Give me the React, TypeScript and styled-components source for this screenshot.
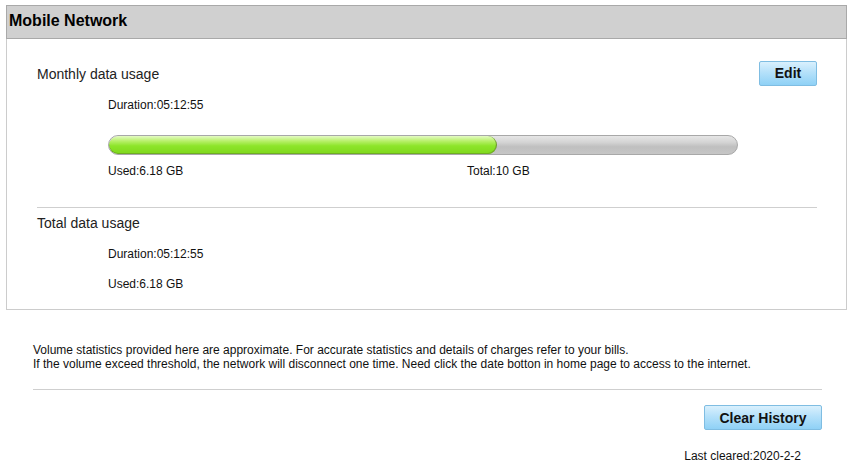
import React from "react";
import styled, { createGlobalStyle } from "styled-components";

const Global = createGlobalStyle`
  html, body { margin: 0; padding: 0; background: #fff; }
  body { font-family: "Liberation Sans", Arial, sans-serif; color: #000; }
`;

const Page = styled.div`
  width: 852px;
  height: 466px;
  padding: 5px 0 0 6px;
  box-sizing: border-box;
  overflow: hidden;
`;

const Panel = styled.section`
  width: 841px;
  height: 305px;
  box-sizing: border-box;
  border: 1px solid #cccccc;
  border-top: none;
  display: flex;
  flex-direction: column;
`;

const Header = styled.header`
  height: 34px;
  box-sizing: border-box;
  background: #d0d0d0;
  border: 1px solid #a9a9a9;
  margin: 0 -1px;
  display: flex;
  align-items: center;
  padding: 0 0 2px 2px;
  font-size: 16px;
  font-weight: bold;
  color: #000;
`;

const Section = styled.div<{ $top: number }>`
  padding: ${(p) => p.$top}px 29px 0 30px;
  display: flex;
  flex-direction: column;
`;

const TitleRow = styled.div`
  display: flex;
  justify-content: space-between;
  align-items: center;
  height: 24px;
`;

const SectionTitle = styled.div`
  font-size: 14px;
  color: #222;
  padding-top: 2px;
`;

const Button = styled.button<{ $w: number }>`
  width: ${(p) => p.$w}px;
  height: 25px;
  box-sizing: border-box;
  border: 1px solid #7fbde2;
  border-radius: 2px;
  background: linear-gradient(#d9f0fd 0%, #b5e1fa 45%, #8fd1f6 100%);
  font-family: "Liberation Sans", Arial, sans-serif;
  font-size: 14px;
  font-weight: bold;
  color: #111;
  padding: 0;
  cursor: pointer;
`;

const Info = styled.div<{ $mt: number }>`
  margin: ${(p) => p.$mt}px 0 0 71px;
  font-size: 12px;
  color: #111;
  line-height: 14px;
`;

const Track = styled.div`
  margin: 23px 0 0 71px;
  width: 630px;
  height: 20px;
  box-sizing: border-box;
  border: 1px solid #a8a8a8;
  border-radius: 10px;
  background: linear-gradient(#e6e6e6 0%, #d4d4d4 35%, #bfbfbf 60%, #c6c6c6 100%);
  overflow: hidden;
  display: flex;
`;

const Fill = styled.div`
  height: 100%;
  box-sizing: border-box;
  border-right: 1px solid #6f9f2c;
  border-radius: 10px;
  background: linear-gradient(#e4fbc4 0%, #b8f06a 28%, #8de52a 55%, #7fd81c 100%);
  box-shadow: inset 0 -1px 0 #6fae22;
`;

const Labels = styled.div`
  margin: 9px 0 0 71px;
  width: 630px;
  display: flex;
  font-size: 12px;
  color: #111;
  line-height: 14px;
`;

const UsedLabel = styled.span`
  width: 359px;
`;

const Divider = styled.hr<{ $w: number; $mt: number }>`
  width: ${(p) => p.$w}px;
  margin: ${(p) => p.$mt}px 0 0 0;
  border: none;
  border-top: 1px solid #cfcfcf;
  height: 0;
`;

const Footer = styled.div`
  padding: 33px 0 0 27px;
  display: flex;
  flex-direction: column;
`;

const Note = styled.p`
  margin: 0;
  font-size: 12px;
  line-height: 14px;
  color: #111;
`;

const Actions = styled.div`
  width: 789px;
  display: flex;
  flex-direction: column;
  align-items: flex-end;
  margin-top: 15px;
`;

const Cleared = styled.div`
  margin: 19px 21px 0 0;
  font-size: 12px;
  color: #111;
`;

export default function App() {
  const used = 6.18;
  const total = 10;
  const pct = (used / total) * 100;
  return (
    <>
      <Global />
      <Page>
        <Panel>
          <Header>Mobile Network</Header>
          <Section $top={22}>
            <TitleRow>
              <SectionTitle>Monthly data usage</SectionTitle>
              <Button $w={58}>Edit</Button>
            </TitleRow>
            <Info $mt={13}>Duration:05:12:55</Info>
            <Track>
              <Fill style={{ width: `${pct}%` }} />
            </Track>
            <Labels>
              <UsedLabel>Used:6.18 GB</UsedLabel>
              <span>Total:10 GB</span>
            </Labels>
            <Divider $w={780} $mt={29} />
          </Section>
          <Section $top={5}>
            <SectionTitle>Total data usage</SectionTitle>
            <Info $mt={16}>Duration:05:12:55</Info>
            <Info $mt={16}>Used:6.18 GB</Info>
          </Section>
        </Panel>
        <Footer>
          <Note>
            Volume statistics provided here are approximate. For accurate statistics and details of charges refer to your bills.
          </Note>
          <Note>
            If the volume exceed threshold, the network will disconnect one time. Need click the date botton in home page to access to the internet.
          </Note>
          <Divider $w={789} $mt={18} />
          <Actions>
            <Button $w={118}>Clear History</Button>
            <Cleared>Last cleared:2020-2-2</Cleared>
          </Actions>
        </Footer>
      </Page>
    </>
  );
}
